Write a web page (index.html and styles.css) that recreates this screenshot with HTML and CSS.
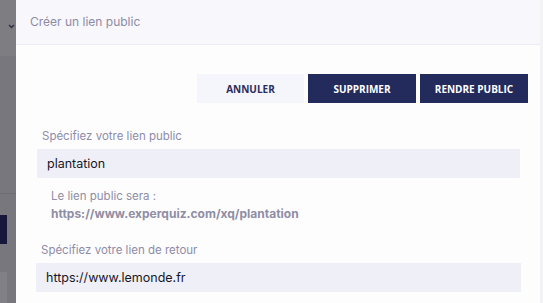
FILE: index.html
```html
<!DOCTYPE html>
<html lang="fr">
<head>
<meta charset="utf-8">
<title>Créer un lien public</title>
<link rel="stylesheet" href="styles.css">
</head>
<body>
<div class="screen">
  <aside class="backdrop">
    <div class="bd-top">
      <svg class="chev" width="7" height="5" viewBox="0 0 7 5"><path d="M1 1 L3.5 3.5 L6 1" fill="none" stroke="#2d3040" stroke-width="1.4"/></svg>
    </div>
    <div class="bd-mid"></div>
    <div class="bd-line"></div>
    <div class="bd-gap1"></div>
    <div class="bd-block"></div>
    <div class="bd-gap2"></div>
    <div class="bd-low"></div>
  </aside>
  <main class="modal">
    <header class="modal-head">
      <h1 class="modal-title">Créer un lien public</h1>
    </header>
    <section class="modal-body">
      <div class="actions">
        <button class="btn btn-light">ANNULER</button>
        <button class="btn btn-dark">SUPPRIMER</button>
        <button class="btn btn-dark">RENDRE PUBLIC</button>
      </div>
      <div class="field">
        <label class="field-label">Spécifiez votre lien public</label>
        <div class="field-input">plantation</div>
        <div class="hint">
          <div class="hint-line">Le lien public sera :</div>
          <div class="hint-url">https://www.experquiz.com/xq/plantation</div>
        </div>
      </div>
      <div class="field field-second">
        <label class="field-label">Spécifiez votre lien de retour</label>
        <div class="field-input">https://www.lemonde.fr</div>
      </div>
    </section>
  </main>
  <div class="scrollbar"></div>
</div>
</body>
</html>
```
FILE: styles.css
```css
* { box-sizing: border-box; }
html, body { margin: 0; padding: 0; }
body {
  width: 543px;
  height: 303px;
  overflow: hidden;
  font-family: Inter, "Noto Sans", sans-serif;
  background: #fdfdfe;
}
.screen {
  display: flex;
  height: 303px;
}
.backdrop {
  width: 16px;
  flex: none;
  display: flex;
  flex-direction: column;
  background: #78777d;
}
.bd-top {
  height: 56px;
  background: #7e7d82;
  display: flex;
  align-items: flex-start;
  padding: 24px 0 0 8px;
}
.chev { display: block; }
.bd-mid { height: 137px; }
.bd-line { height: 1px; background: #6e6d73; }
.bd-gap1 { height: 21px; }
.bd-block { height: 29px; width: 7px; background: #16173a; }
.bd-gap2 { height: 28px; }
.bd-low { flex: 1; width: 7px; background: #818086; }

.modal {
  flex: 1;
  display: flex;
  flex-direction: column;
  background: #fdfdfe;
}
.modal-head {
  height: 45px;
  background: #f7f7fc;
  border-bottom: 1px solid #ebebf4;
  display: flex;
  align-items: center;
  padding-left: 14px;
}
.modal-title {
  margin: 0;
  font-size: 12px;
  font-weight: 400;
  color: #8d8ca5;
  padding-bottom: 1px;
}
.modal-body {
  padding: 29px 12px 0 21px;
}
.actions {
  display: flex;
  justify-content: flex-end;
  gap: 4px;
}
.btn {
  width: 108px;
  height: 29px;
  border: 0;
  padding: 0;
  font-family: "Open Sans", Lato, sans-serif;
  font-weight: 700;
  font-size: 10px;
  letter-spacing: 0;
}
.btn-light { background: #f5f5fc; color: #2a2e5c; width: 107px; }
.btn-dark { background: #232a5c; color: #ffffff; }

.field {
  display: flex;
  flex-direction: column;
  margin-right: 8px;
}
.field-label {
  font-size: 11.5px;
  color: #8e8ca8;
  padding-left: 5px;
  line-height: 16px;
  margin-top: 25px;
  margin-bottom: 5px;
}
.field-input {
  height: 29px;
  background: #efeff8;
  font-size: 12.5px;
  color: #171726;
  display: flex;
  align-items: center;
  padding-left: 10px;
}
.hint {
  padding: 9px 0 0 14px;
  font-size: 11.5px;
  color: #8f8ea4;
  line-height: 18px;
}
.hint-url { font-weight: 700; font-size: 12px; }
.field-second { margin-left: -1px; margin-right: 7px; }
.field-second .field-label { margin-top: 19px; }
.scrollbar {
  width: 3px;
  flex: none;
  background: #f3f3f6;
}
```
